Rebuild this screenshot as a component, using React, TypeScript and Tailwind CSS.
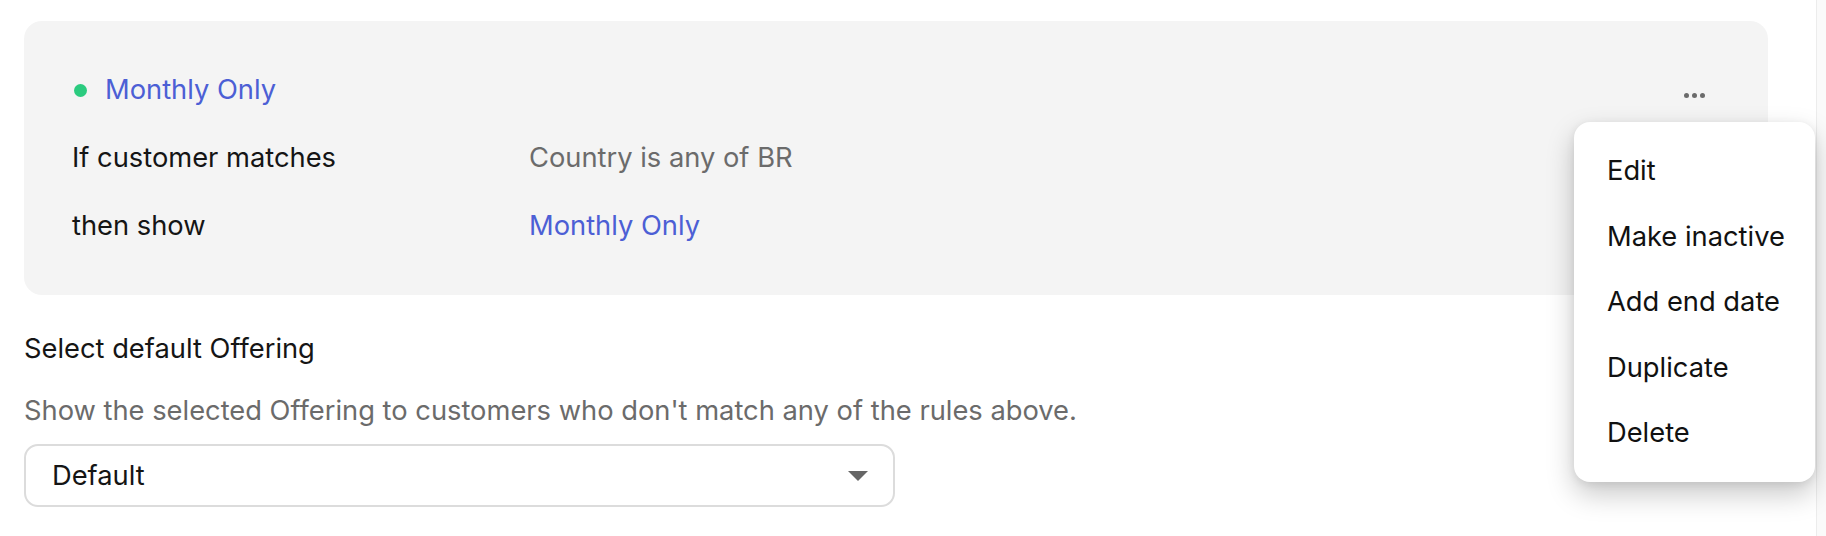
import React from 'react';

export default function App() {
  const menuItems = ['Edit', 'Make inactive', 'Add end date', 'Duplicate', 'Delete'];

  return (
    <div className="flex h-[536px] w-full overflow-hidden bg-white font-['Inter','Noto_Sans',sans-serif] text-[27.3px] leading-[34px] text-[#151515]">
      <main className="flex-1 pl-6 pr-12 pt-[21px]">
        {/* Rule card */}
        <div className="relative rounded-[18px] bg-[#f4f4f4] py-[35px] pl-12 pr-[63px]">
          <div className="flex h-[68px] items-center justify-between">
            <div className="flex items-center">
              <span className="ml-[2px] h-[13px] w-[13px] rounded-full bg-[#2bcb7f]" />
              <span className="ml-[18px] text-[#4c5fd5]">Monthly Only</span>
            </div>
            <button className="mt-[10px] flex gap-[3px]">
              <span className="h-[5px] w-[5px] rounded-full bg-[#6b6b6b]" />
              <span className="h-[5px] w-[5px] rounded-full bg-[#6b6b6b]" />
              <span className="h-[5px] w-[5px] rounded-full bg-[#6b6b6b]" />
            </button>
          </div>
          <div className="flex h-[68px] items-center">
            <span className="w-[457px]">If customer matches</span>
            <span className="text-[#6b6b6b]">Country is any of BR</span>
          </div>
          <div className="flex h-[68px] items-center">
            <span className="w-[457px]">then show</span>
            <span className="text-[#4c5fd5]">Monthly Only</span>
          </div>

          {/* Open actions menu */}
          <div className="absolute right-[-47px] top-[101px] w-[241px] rounded-[16px] bg-white py-4 shadow-[0_12px_28px_rgba(0,0,0,0.22),0_2px_8px_rgba(0,0,0,0.08)]">
            {menuItems.map((item) => (
              <div key={item} className="whitespace-nowrap px-[33px] py-4 leading-[33.6px] text-[#111]">
                {item}
              </div>
            ))}
          </div>
        </div>

        <div className="mt-[37px]">Select default Offering</div>
        <div className="mt-[28px] text-[#6b6b6b]">
          Show the selected Offering to customers who don't match any of the rules above.
        </div>
        <div className="mt-4 flex h-[63px] w-[871px] items-center justify-between rounded-[14px] border-2 border-[#dcdcdc] bg-white pl-[26px] pr-[25px]">
          <span>Default</span>
          <svg width="20" height="10" viewBox="0 0 20 10">
            <path d="M0 0 L20 0 L10 10 Z" fill="#666" />
          </svg>
        </div>
      </main>
      <aside className="w-[10px] border-l border-[#ececec] bg-[#fafafa]" />
    </div>
  );
}
